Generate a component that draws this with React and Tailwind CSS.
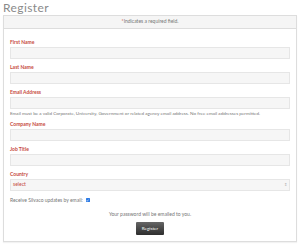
import React from 'react';

const Field = ({ label, children, help }) => (
    <div className="mb-[5px]">
        <div className="text-[5px] leading-[6px] font-bold text-[#c64a3d] mb-[2px]">{label}</div>
        {children || <div className="h-[12px] bg-[#f6f6f6] border border-[#e6e6e6]" />}
        {help && <div className="mt-[1px] text-[4.6px] leading-[6px] text-[#777]">{help}</div>}
    </div>
);

const App = () => {
    return (
        <div className="w-[300px] h-[247px] bg-white px-[3px] pt-[1px] font-['Lato',sans-serif] text-[#666]">
            <h1 className="text-[12px] leading-[14px] text-[#8a8a8a] tracking-[0.4px]">Register</h1>
            <div className="border border-[#dddddd] shadow-[0_1px_1px_rgba(0,0,0,0.05)] h-[227px]">
                <div className="h-[13px] bg-[#f5f5f5] border-b border-[#dddddd] flex items-center justify-center text-[5px] text-[#777]">
                    <span className="text-[#c64a3d]">*</span>Indicates a required field.
                </div>
                <div className="px-[6px] pt-[10px]">
                    <Field label="First Name" />
                    <Field label="Last Name" />
                    <Field
                        label="Email Address"
                        help="Email must be a valid Corporate, University, Government or related agency email address. No free email addresses permitted."
                    />
                    <Field label="Company Name" />
                    <Field label="Job Title" />
                    <Field label="Country">
                        <div className="h-[12px] bg-[#f6f6f6] border border-[#e6e6e6] flex items-center justify-between px-[2px]">
                            <span className="text-[5px] text-[#c64a3d]">select</span>
                            <span className="text-[4px] text-[#aaa] leading-none">⇕</span>
                        </div>
                    </Field>
                    <div className="flex items-center gap-[3px] mt-[6px] text-[5px] leading-[6px] text-[#777]">
                        Receive Silvaco updates by email:
                        <span className="w-[4px] h-[4px] bg-[#2d7be5] rounded-[0.5px] flex items-center justify-center">
                            <svg viewBox="0 0 8 8" className="w-[3px] h-[3px]">
                                <path d="M1 4 L3 6 L7 1.5" stroke="white" strokeWidth="1.6" fill="none" />
                            </svg>
                        </span>
                    </div>
                    <div className="mt-[8px] text-center text-[5px] leading-[6px] text-[#777]">
                        Your password will be emailed to you.
                    </div>
                    <div className="flex justify-center mt-[5px]">
                        <button
                            type="button"
                            className="w-[28px] h-[13px] rounded-[1px] bg-gradient-to-b from-[#666] to-[#2e2e2e] text-white text-[4.6px]"
                        >
                            Register
                        </button>
                    </div>
                </div>
            </div>
        </div>
    );
};

export default App;
